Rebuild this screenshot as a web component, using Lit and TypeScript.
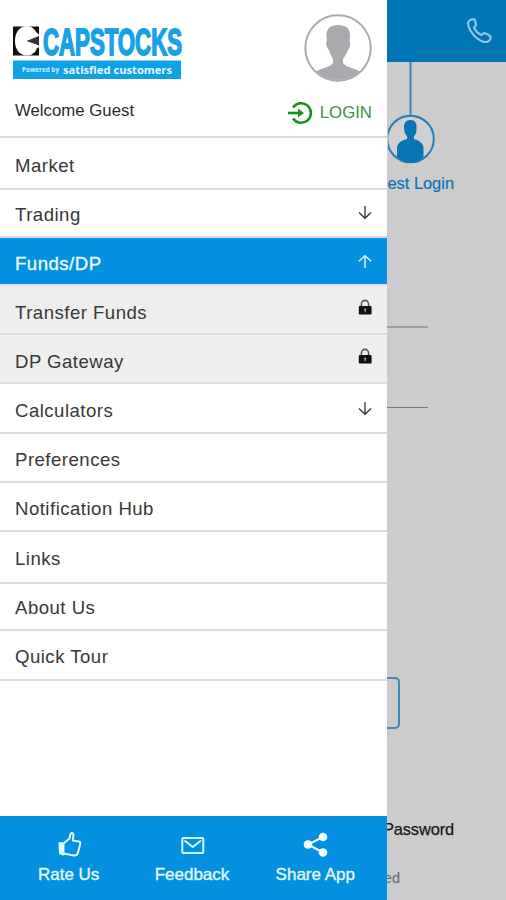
import { LitElement, html, svg, css, nothing } from "lit";
import { customElement } from "lit/decorators.js";
import { classMap } from "lit/directives/class-map.js";
import { styleMap } from "lit/directives/style-map.js";

type Mark = "down" | "up" | "lock" | "";
interface Item { label: string; height: number; top: number; mark: Mark; kind?: "active" | "sub"; }

const items: Item[] = [
  { label: "Market", height: 52, top: 17, mark: "" },
  { label: "Trading", height: 48, top: 14, mark: "down" },
  { label: "Funds/DP", height: 48, top: 15, mark: "up", kind: "active" },
  { label: "Transfer Funds", height: 49, top: 16, mark: "lock", kind: "sub" },
  { label: "DP Gateway", height: 49, top: 16, mark: "lock", kind: "sub" },
  { label: "Calculators", height: 50, top: 16, mark: "down" },
  { label: "Preferences", height: 49, top: 15, mark: "" },
  { label: "Notification Hub", height: 49, top: 15, mark: "" },
  { label: "Links", height: 52, top: 16, mark: "" },
  { label: "About Us", height: 47, top: 13, mark: "" },
  { label: "Quick Tour", height: 50, top: 15, mark: "" },
];

const marks = {
  down: svg`<path d="M8 2V14M2 8.500L8 14.300L14 8.500" fill="none" stroke="#333" stroke-width="1.300"/>`,
  up: svg`<path d="M8 15V3M1.800 8.300L8 2.700L14.200 8.300" fill="none" stroke="#d9f6ff" stroke-width="1.500"/>`,
  lock: svg`<path d="M4.400 8V5.200a3.600 3.800 0 0 1 7.200 0V8" fill="none" stroke="#555" stroke-width="1.600"/><rect x="1.800" y="7" width="12.800" height="8.600" rx="1" fill="#111"/><circle cx="8.200" cy="10.500" r="1.100" fill="#aaa"/><path d="M8.200 11v2.400" stroke="#aaa"/>`,
};

@customElement("app-root")
export class AppRoot extends LitElement {
  static styles = css`
    :host { display: flex; width: 506px; height: 900px; overflow: hidden; font-family: "Liberation Sans", Arial, sans-serif; background: #cccccc; }
    * { box-sizing: border-box; }
    svg { display: block; flex: none; }
    .drawer { width: 387px; flex: none; display: flex; flex-direction: column; background: #fff; }
    .header { height: 138px; border-bottom: 2px solid #dadada; padding: 14px 15px 0 12px; }
    .brand { display: flex; justify-content: space-between; }
    .logo { margin-top: 9px; }
    .logo-name { font: bold 36px "Liberation Sans", Arial, sans-serif; }
    .logo-small { font: bold 7px "Open Sans", "Liberation Sans", sans-serif; }
    .logo-tag { font: bold 11px "Open Sans", "Liberation Sans", sans-serif; }
    .account { display: flex; align-items: center; justify-content: space-between; height: 26px; margin-top: 18px; padding-left: 3px; font-size: 16.8px; line-height: 20px; color: #2b2b2b; }
    .welcome { margin-top: -4px; }
    .login { display: flex; align-items: center; gap: 6px; color: #3d923b; font-size: 16.8px; }
    .row { display: flex; justify-content: space-between; border-bottom: 2px solid #dcdcdc; padding: 0 14px 0 15px; font-size: 18.6px; line-height: 22px; letter-spacing: .48px; color: #383838; }
    .row.sub { background: #eeeeee; }
    .row.active { background: #0390e0; color: #e9faff; border-bottom-color: #d5e4ef; -webkit-text-stroke: .35px #e9faff; }
    .mark.lock { margin-top: -3px; }
    .footer { margin-top: auto; height: 84px; background: #0390e0; color: #e4f8ff; display: flex; padding: 14px 10px 0 7px; }
    .action { flex: 1; display: flex; flex-direction: column; align-items: center; gap: 6px; font-size: 17px; line-height: 20px; white-space: nowrap; -webkit-text-stroke: .35px #e4f8ff; }
    .page { flex: 1; min-width: 0; overflow: hidden; display: flex; flex-direction: column; }
    .bar { height: 62px; background: #0075b6; display: flex; justify-content: flex-end; padding: 17px 13px 0 0; flex: none; }
    .guest { color: #0875b5; font-size: 16.4px; line-height: 20px; height: 132px; flex: none; padding-left: 1px; }
    .right { display: flex; justify-content: flex-end; white-space: nowrap; }
    .guest-label { padding-right: 52px; margin-top: -1px; -webkit-text-stroke: .2px #0875b5; }
    .field { width: 41px; height: 2px; background: #9e9e9e; flex: none; margin-top: 132px; }
    .field.second { margin-top: 79px; height: 1px; background: #777; }
    .button { width: 13px; height: 52px; flex: none; margin-top: 269px; border: 2px solid #3f88ba; border-left: 0; border-radius: 0 5px 5px 0; }
    .password { margin-top: 90px; padding-right: 52px; font-size: 16.4px; line-height: 20px; color: #171717; -webkit-text-stroke: .25px #171717; letter-spacing: -.12px; }
    .note { margin-top: 30px; padding-right: 106px; font-size: 14.5px; line-height: 18px; color: #666; }
  `;

  render() {
    return html`
      <nav class="drawer">
        <header class="header">
          <div class="brand">
            <svg class="logo" width="172" height="58" viewBox="0 0 172 58">
              <rect x="1" y="3.500" width="26" height="29" fill="#111"/>
              <path d="M15 3C7 3 3 10 3 18S7 32.500 15 32.500C20 32.500 24 29 25 25L28 24V22L15 18L28 13V12L25 10C22 6 20 3 15 3Z" fill="#fff"/>
              <path d="M15 18L27 13V22.500Z" fill="#333"/>
              <text class="logo-name" x="31" y="32" textLength="139" lengthAdjust="spacingAndGlyphs" fill="#18a2e5" stroke="#18a2e5" stroke-width="1.800">CAPSTOCKS</text>
              <rect x="1" y="37.500" width="168" height="18.500" fill="#0fa0e6"/>
              <text class="logo-small" x="10" y="49" textLength="37" lengthAdjust="spacingAndGlyphs" fill="#d2f3ff">Powered by</text>
              <text class="logo-tag" x="51" y="51" textLength="109" lengthAdjust="spacingAndGlyphs" fill="#e4f8ff">satisfied customers</text>
            </svg>
            <svg width="68" height="68" viewBox="0 0 68 68">
              <circle cx="34" cy="34" r="32.700" fill="#fff" stroke="#aaa9ae" stroke-width="2"/>
              <path d="M34 11C26 11 22 15 22.500 22L23 27C21 28 23 35 25 36C26 40 28 43 29 45V49C27 53 18 54 12 57.500A32.500 32.500 0 0 0 56 57.500C50 54 41 53 39 49V45C41 42 43 39 44 36C46 34 47 28 45.500 27L46 22C46.500 15 42 11 34 11Z" fill="#aaa9ae"/>
            </svg>
          </div>
          <div class="account">
            <span class="welcome">Welcome Guest</span>
            <span class="login">
              <svg width="26" height="24" viewBox="0 0 26 24">
                <path d="M5 6.500A9.800 9.800 0 1 1 5 17.500" fill="none" stroke="#169016" stroke-width="2.500"/>
                <path d="M0 12H13" stroke="#169016" stroke-width="2.600"/><path d="M10 7.500L16 12L10 16.500Z" fill="#169016"/>
              </svg>LOGIN</span>
          </div>
        </header>
        ${items.map((i) => html`
          <div class=${classMap({ row: true, active: i.kind === "active", sub: i.kind === "sub" })}
               style=${styleMap({ height: `${i.height}px`, paddingTop: `${i.top}px` })}>
            <span>${i.label}</span>
            ${i.mark ? html`<svg class="mark ${i.mark}" width="16" height="17" viewBox="0 0 16 17">${marks[i.mark]}</svg>` : nothing}
          </div>`)}
        <footer class="footer">
          <div class="action">
            <svg width="26" height="29" viewBox="0 0 26 29" fill="none" stroke="#e4f8ff" stroke-width="2" stroke-linejoin="round">
              <path d="M7.500 13.500L13.500 8.500L14.500 4Q16.500 1.500 17.500 4.500L16.800 10.500L23 11.500Q25 12 24 15L22 22.500Q21 26 18 25.500L7.500 23.500"/><path d="M3.500 13L7.500 13.500V24.500L4 23.500Z" fill="#e4f8ff"/>
            </svg>Rate Us</div>
          <div class="action">
            <svg width="26" height="29" viewBox="0 0 26 29" fill="none" stroke="#d5f5ff" stroke-width="2" stroke-linejoin="round">
              <rect x="3.300" y="8" width="21" height="15" rx="1"/><path d="M5.500 10.500L13.800 17L22 10.500"/>
            </svg>Feedback</div>
          <div class="action">
            <svg width="26" height="29" viewBox="0 0 26 29">
              <path d="M21 7L6 14.500L21 22.500" fill="none" stroke="#e9faff" stroke-width="2"/>
              <g fill="#f2fcff"><circle cx="21" cy="7" r="4.300"/><circle cx="6" cy="14.500" r="4.300"/><circle cx="21" cy="22.500" r="4.300"/></g>
            </svg>Share App</div>
        </footer>
      </nav>
      <main class="page">
        <div class="bar">
          <svg width="28" height="28" viewBox="0 0 28 28">
            <path d="M6 2.500L9.500 2.200Q11 5 11 8.500L9 10.300Q11 15.500 16.500 18L19 16Q23 17 25.500 19.500Q26.500 23 22.500 24.800Q17 26 10 19.500Q3 12 3 6Q3.500 3.500 6 2.500Z" fill="none" stroke="#9bcae6" stroke-width="2" stroke-linejoin="round"/>
          </svg>
        </div>
        <div class="guest">
          <svg width="50" height="112" viewBox="0 0 50 112">
            <path d="M22.500 0V53" stroke="#3389bc" stroke-width="2"/>
            <circle cx="22.500" cy="77" r="23.300" fill="#d0d0d0" stroke="#257fb6" stroke-width="2"/>
            <path d="M22.500 58Q15.500 58 16 66Q16 71 19 74V77Q10 79 9 85V95Q15 101 22.500 101T35.500 95V85Q34 79 26 77V74Q29 71 28.500 66Q29 58 22.500 58Z" fill="#0875b5"/>
          </svg>
          <div class="right guest-label">Guest Login</div>
        </div>
        <div class="field"></div>
        <div class="field second"></div>
        <div class="button"></div>
        <div class="right password">Forgot Password</div>
        <div class="right note">Secured</div>
      </main>`;
  }
}
